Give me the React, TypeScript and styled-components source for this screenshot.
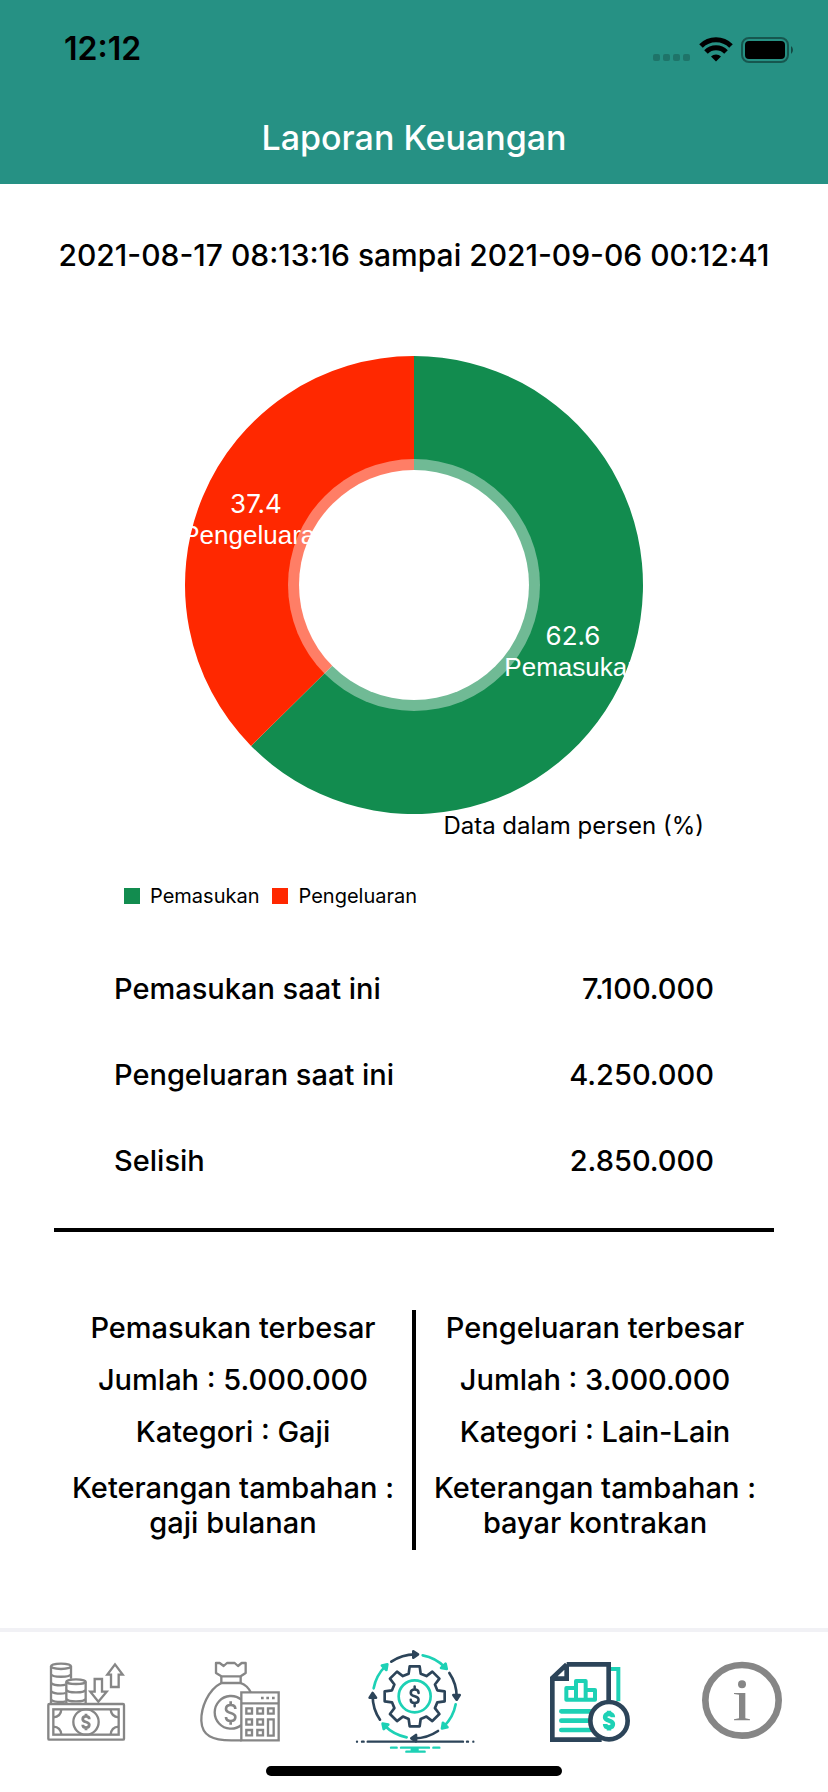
import React from "react";
import styled, { createGlobalStyle } from "styled-components";

const GlobalStyle = createGlobalStyle`
  *, *::before, *::after { box-sizing: border-box; }
  body {
    margin: 0;
    background: #fff;
    color: #000;
    font-family: Inter, "Liberation Sans", sans-serif;
  }
  h1, h2, p, dl, dt, dd { margin: 0; font-weight: inherit; }
`;

const TEAL = "#269184";
const GREEN = "#128c4f";
const RED = "#ff2800";
const GREY = "#868686";
const NAVY = "#2c4459";
const MINT = "#1dd1b5";

const Screen = styled.div`
  min-height: 100vh;
  display: flex;
  flex-direction: column;
`;

const Header = styled.header`
  background: ${TEAL};
  padding-bottom: 22px;
`;

const StatusBar = styled.div`
  height: 98px;
  padding: 0 32px 0 64px;
  display: flex;
  align-items: center;
  justify-content: space-between;
`;

const Clock = styled.time`
  font-size: 32px;
  line-height: 36px;
  font-weight: 600;
`;

const StatusIcons = styled.div`
  display: flex;
  align-items: center;
`;

const Title = styled.h1`
  padding-top: 16px;
  color: #fff;
  font-size: 34px;
  line-height: 48px;
  font-weight: 500;
  text-align: center;
`;

const Main = styled.main`
  flex: 1;
  padding: 54px 54px 78px;
  font-size: 29px;
  line-height: 35px;
  font-weight: 500;
`;

const Period = styled.h2`
  font-size: 30px;
  line-height: 35px;
  text-align: center;
`;

const Chart = styled.figure`
  margin: 83px 70px 0;
  display: flex;
  flex-direction: column;
  font-weight: 400;
`;

const Donut = styled.svg`
  display: block;
  align-self: center;
  overflow: visible;
`;

const Caption = styled.figcaption`
  align-self: flex-end;
  font-size: 24px;
  line-height: 24px;
`;

const Legend = styled.ul`
  list-style: none;
  margin: 46px 0 0;
  padding: 0;
  display: flex;
  gap: 13px;
  font-size: 20px;
  line-height: 24px;
`;

const LegendItem = styled.li<{ $color: string }>`
  display: flex;
  align-items: center;
  gap: 10px;

  &::before {
    content: "";
    width: 16px;
    height: 16px;
    background: ${(p) => p.$color};
  }
`;

const Totals = styled.dl`
  margin-top: 63px;
  padding: 0 60px 50px;
  border-bottom: 4px solid #000;
  display: flex;
  flex-direction: column;
  gap: 51px;
`;

const TotalRow = styled.div`
  display: flex;
  justify-content: space-between;
`;

const Highlights = styled.div`
  margin-top: 78px;
  display: grid;
  grid-template-columns: 1fr 4px 1fr;
`;

const Divider = styled.div`
  background: #000;
`;

const Highlight = styled.section`
  padding: 0 16px;
  min-height: 240px;
  display: flex;
  flex-direction: column;
  gap: 17px;
  text-align: center;
`;

const Note = styled.p`
  padding-top: 4px;
`;

const TabBar = styled.nav`
  border-top: 4px solid #f1f1f5;
  padding: 3px 46px 0;
  display: flex;
  align-items: center;
  justify-content: space-between;
`;

const Tab = styled.button`
  border: 0;
  padding: 0;
  background: none;
  display: block;
  cursor: pointer;

  svg { display: block; overflow: visible; }
`;

const HomeIndicator = styled.div`
  width: 296px;
  height: 10px;
  border-radius: 5px;
  background: #000;
  margin: 1px auto 16px;
`;

const Signal = () => (
  <svg width="148" height="30" viewBox="0 0 148 30" aria-hidden="true">
    <g fill="#000" fillOpacity="0.2">
      <rect x="5" y="20" width="7" height="7" rx="2" />
      <rect x="15" y="20" width="7" height="7" rx="2" />
      <rect x="25" y="20" width="7" height="7" rx="2" />
      <rect x="35" y="20" width="7" height="7" rx="2" />
    </g>
    <g fill="none" stroke="#000" strokeWidth="5">
      <path d="M53 12 A21 21 0 0 1 83 12" />
      <path d="M58 18 A14 14 0 0 1 78 18" />
    </g>
    <path d="M68 27.500 L63 22.500 A7 7 0 0 1 73 22.500 Z" fill="#000" />
    <rect x="94" y="4" width="46" height="24" rx="7" fill="none" stroke="#000" strokeOpacity="0.4" strokeWidth="2" />
    <rect x="97" y="7" width="40" height="18" rx="4" fill="#000" />
    <path d="M143 12 a5 5 0 0 1 0 8 z" fill="#000" fillOpacity="0.5" />
  </svg>
);

const polar = (r: number, share: number) => {
  const a = share * 2 * Math.PI;
  return `${229 + r * Math.sin(a)} ${229 - r * Math.cos(a)}`;
};

const slice = (from: number, to: number) =>
  `M229 229 L${polar(229, from)} A229 229 0 ${to - from > 0.5 ? 1 : 0} 1 ${polar(229, to)} Z`;

const INCOME_SHARE = 0.626;

const BalanceDonut = () => (
  <Donut width="458" height="458" viewBox="0 0 458 458" role="img" aria-label="Pemasukan 62.6, Pengeluaran 37.4">
    <path d={slice(0, INCOME_SHARE)} fill={GREEN} />
    <path d={slice(INCOME_SHARE, 1)} fill={RED} />
    <circle cx="229" cy="229" r="126" fill="#fff" fillOpacity="0.4" />
    <circle cx="229" cy="229" r="115" fill="#fff" />
    <g fill="#fff" fontSize="26" textAnchor="middle">
      <text x="71" y="157">37.4</text>
      <text x="71" y="188" fontFamily="Liberation Sans, sans-serif">Pengeluaran</text>
      <text x="388" y="289">62.6</text>
      <text x="388" y="320" fontFamily="Liberation Sans, sans-serif">Pemasukan</text>
    </g>
  </Donut>
);

const DOLLAR =
  "M0-35V-24M0 24V35M14-12C14-20 8-24 0-24S-14-20-14-12C-14 4 14-4 14 12C14 20 8 24 0 24S-14 20-14 12";

const CashIcon = () => (
  <svg width="80" height="80" viewBox="48 60 240 240" fill="none" stroke={GREY} strokeWidth="7" aria-hidden="true">
    <ellipse cx="93" cy="79" rx="30" ry="8" />
    <path d="M63 79V190M123 79V116M63 102C66 113 120 113 123 102M63 127C66 138 98 137 107 134M63 152C66 163 98 162 107 159M63 177C66 188 98 187 107 184" />
    <ellipse cx="138" cy="125" rx="29" ry="7" />
    <path d="M109 125V190M167 125V190M109 149C112 160 164 160 167 149M109 176C112 187 164 187 167 176" />
    <path d="M194 117H216V155H230L205 185L181 155H194Z" />
    <path d="M255 73L278 104H266V141H243V104H232Z" />
    <rect x="55" y="192" width="227" height="107" rx="3" />
    <rect x="70" y="208" width="196" height="76" />
    <path d="M94 208C93 222 84 231 70 232M242 208C243 222 252 231 266 232M70 260C84 261 93 270 94 284M266 260C252 261 243 270 242 284" />
    <circle cx="168" cy="246" r="38" />
    <path d={DOLLAR} transform="translate(168 246) scale(.7)" strokeWidth="12" />
  </svg>
);

const BudgetIcon = () => (
  <svg width="80" height="80" viewBox="45 60 240 240" fill="none" stroke={GREY} strokeWidth="7" aria-hidden="true">
    <path d="M93 69H104L116 78L126 69H149L159 78L170 69H182V99L167 109H109L93 99Z" strokeLinejoin="round" />
    <path d="M109 109V129H167V109" />
    <path d="M109 129C68 150 48 205 49 242C51 288 83 301 139 301H170M167 129C181 134 191 144 197 157" />
    <path d="M169 179A49 49 0 1 0 169 255" />
    <path d={DOLLAR} transform="translate(137 219)" strokeWidth="8" />
    <path d="M169 157H281V301H169ZM169 190H281" />
    <path d="M228 174H236M244 174H252M261 174H269" strokeWidth="8" />
    <path d="M184 205H201V221H184ZM217 205H234V221H217ZM249 205H266V221H249ZM184 238H201V254H184ZM217 238H234V254H217ZM249 238H266V287H249ZM184 270H201V286H184ZM217 270H234V286H217Z" />
  </svg>
);

const STEPS = [0, 1, 2, 3, 4, 5, 6, 7];

const gearOutline =
  STEPS.map((step, i) => {
    const a = (step * Math.PI) / 4;
    return [[-18, -68], [-15, -90], [15, -90], [18, -68]]
      .map(([x, y], j) => {
        const px = (x * Math.cos(a) - y * Math.sin(a)).toFixed(1);
        const py = (x * Math.sin(a) + y * Math.cos(a)).toFixed(1);
        return `${i + j === 0 ? "M" : "L"}${px} ${py}`;
      })
      .join("");
  }).join("") + "Z";

const CycleIcon = () => (
  <svg width="120" height="130" viewBox="27 0 360 390" fill="none" strokeLinecap="round" strokeLinejoin="round" aria-hidden="true">
    <g transform="translate(209 184)">
      {STEPS.map((step) => {
        const color = step % 2 ? MINT : NAVY;
        return (
          <g key={step} transform={`rotate(${step * 45})`} stroke={color} strokeWidth="8">
            <path d="M-70 -104A126 126 0 0 1 2 -126" />
            <path d="M-4 -135L10 -126L-4 -116Z" fill={color} />
          </g>
        );
      })}
      <path d={gearOutline} stroke={NAVY} strokeWidth="8" />
      <circle r="48" stroke={MINT} strokeWidth="8" />
      <path d={DOLLAR} transform="scale(.84)" stroke={NAVY} strokeWidth="9" />
    </g>
    <path d="M68 320H354M51 320H56M366 320H369M36 320H36M385 320H385" stroke={NAVY} strokeWidth="7" />
    <path d="M138 338H155M168 338H252M265 338H283M184 350H239M200 344H218" stroke={MINT} strokeWidth="7" />
  </svg>
);

const ReportIcon = () => (
  <svg width="80" height="80" viewBox="39 60 240 240" fill="none" strokeWidth="14" aria-hidden="true">
    <path d="M226 87H250V184" stroke={MINT} strokeWidth="12" />
    <path d="M95 73H221V184M95 73L52 114V299H200M95 73V116H52" stroke={NAVY} />
    <path d="M94 179V144H123V123H152V150H180V179ZM123 144V179M152 150V179" stroke={MINT} strokeWidth="12" strokeLinejoin="round" />
    <path d="M79 214H165M79 242H162M79 270H165" stroke={MINT} strokeLinecap="round" />
    <circle cx="222" cy="242" r="56" fill="#fff" stroke={NAVY} />
    <path d={DOLLAR} transform="translate(222 242) scale(.84)" stroke={MINT} strokeWidth="16" />
  </svg>
);

const InfoIcon = () => (
  <svg width="80" height="80" viewBox="51 60 240 240" fill={GREY} aria-hidden="true">
    <ellipse cx="171" cy="181" rx="110" ry="106" fill="none" stroke={GREY} strokeWidth="20" />
    <circle cx="171" cy="133" r="12" />
    <path d="M147 159H181V235L195 238V241H147V238L162 235V164L147 162Z" />
  </svg>
);

const totals = [
  { label: "Pemasukan saat ini", value: "7.100.000" },
  { label: "Pengeluaran saat ini", value: "4.250.000" },
  { label: "Selisih", value: "2.850.000" },
];

const tabs = [
  { name: "Transaksi", Icon: CashIcon },
  { name: "Anggaran", Icon: BudgetIcon },
  { name: "Beranda", Icon: CycleIcon },
  { name: "Laporan", Icon: ReportIcon },
  { name: "Info", Icon: InfoIcon },
];

export default function App() {
  return (
    <Screen>
      <GlobalStyle />
      <Header>
        <StatusBar>
          <Clock>12:12</Clock>
          <StatusIcons>
            <Signal />
          </StatusIcons>
        </StatusBar>
        <Title>Laporan Keuangan</Title>
      </Header>
      <Main>
        <Period>2021-08-17 08:13:16 sampai 2021-09-06 00:12:41</Period>
        <Chart>
          <BalanceDonut />
          <Caption>Data dalam persen (%)</Caption>
          <Legend>
            <LegendItem $color={GREEN}>Pemasukan</LegendItem>
            <LegendItem $color={RED}>Pengeluaran</LegendItem>
          </Legend>
        </Chart>
        <Totals>
          {totals.map((t) => (
            <TotalRow key={t.label}>
              <dt>{t.label}</dt>
              <dd>{t.value}</dd>
            </TotalRow>
          ))}
        </Totals>
        <Highlights>
          <Highlight>
            <p>Pemasukan terbesar</p>
            <p>Jumlah : 5.000.000</p>
            <p>Kategori : Gaji</p>
            <Note>Keterangan tambahan : gaji bulanan</Note>
          </Highlight>
          <Divider />
          <Highlight>
            <p>Pengeluaran terbesar</p>
            <p>Jumlah : 3.000.000</p>
            <p>Kategori : Lain-Lain</p>
            <Note>Keterangan tambahan : bayar kontrakan</Note>
          </Highlight>
        </Highlights>
      </Main>
      <TabBar>
        {tabs.map(({ name, Icon }) => (
          <Tab key={name} type="button" aria-label={name}>
            <Icon />
          </Tab>
        ))}
      </TabBar>
      <HomeIndicator />
    </Screen>
  );
}
